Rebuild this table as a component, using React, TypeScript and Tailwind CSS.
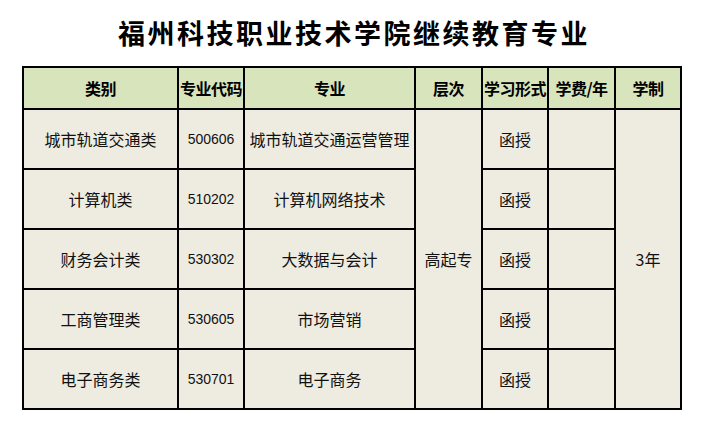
const headers = ["类别", "专业代码", "专业", "层次", "学习形式", "学费/年", "学制"];

const majors = [
  { category: "城市轨道交通类", code: "500606", name: "城市轨道交通运营管理" },
  { category: "计算机类", code: "510202", name: "计算机网络技术" },
  { category: "财务会计类", code: "530302", name: "大数据与会计" },
  { category: "工商管理类", code: "530605", name: "市场营销" },
  { category: "电子商务类", code: "530701", name: "电子商务" },
];

const cell = "flex items-center justify-center bg-[#eeece1] text-[16px] text-[#111]";

const App = () => {
  return (
    <div
      className="w-[702px] h-[441px] bg-white"
      style={{ fontFamily: '"Noto Sans CJK SC", "Liberation Sans", sans-serif' }}
    >
      {/* 标题 */}
      <div className="h-[64px] flex items-center justify-center pl-[6px]">
        <h1 className="text-[27px] font-bold tracking-[2.5px] text-black leading-none">
          福州科技职业技术学院继续教育专业
        </h1>
      </div>

      {/* 专业表格 */}
      <div className="mt-[2px] ml-[22px] w-[660px] grid grid-cols-[153px_64px_169px_65px_64px_65px_64px] grid-rows-[40px_repeat(5,58px)] gap-[2px] p-[2px] bg-black">
        {headers.map((h) => (
          <div
            key={h}
            className="flex items-center justify-center bg-[#d8e4bc] text-[16px] font-bold text-black whitespace-nowrap tracking-[-0.5px]"
          >
            {h}
          </div>
        ))}

        {majors.map((m, i) => (
          <div key={m.code} className="contents">
            <div className={cell}>{m.category}</div>
            <div className={cell}>
              <span className="text-[14px]" style={{ fontFamily: '"Liberation Sans", sans-serif' }}>
                {m.code}
              </span>
            </div>
            <div className={cell}>{m.name}</div>
            {i === 0 && <div className={`${cell} row-span-5`}>高起专</div>}
            <div className={cell}>函授</div>
            <div className={cell}></div>
            {i === 0 && <div className={`${cell} row-span-5`}>3年</div>}
          </div>
        ))}
      </div>
    </div>
  );
};

export default App;
